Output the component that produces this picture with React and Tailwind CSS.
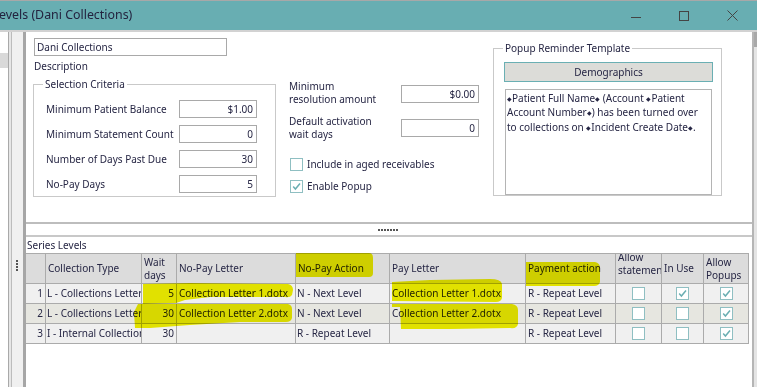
import React from "react";

const BORDER = "border-[#a9a9a9]";

function Box({ children, className = "" }) {
  return (
    <div
      className={`h-[18px] w-[78px] border ${BORDER} bg-white flex items-center justify-end pr-[3px] ${className}`}
    >
      {children}
    </div>
  );
}

function Check({ checked }) {
  return (
    <div className="w-[13px] h-[13px] border border-[#8fbfc2] bg-white flex items-center justify-center shrink-0">
      {checked && (
        <svg width="11" height="11" viewBox="0 0 11 11">
          <path d="M2.2 5.6 L4.4 8 L9 2.6" fill="none" stroke="#6aaeb2" strokeWidth="1.5" />
        </svg>
      )}
    </div>
  );
}

function Dia() {
  return <span className="text-[6px] align-[1px]">◆</span>;
}

const COLS =
  "grid grid-cols-[20px_96px_35px_119px_94px_136px_90px_46px_42px_45px]";
const CELL = "border-r border-b border-[#ababab] overflow-hidden whitespace-nowrap";

function HeadCell({ children, className = "" }) {
  return (
    <div className={`${CELL} h-[30px] bg-[#dcdcdc] flex flex-col justify-center pl-[2px] leading-[13px] ${className}`}>
      {children}
    </div>
  );
}

function Row({ n, bg, type, wait, npl, npa, pl, pa, c1, c2, c3 }) {
  const base = `${CELL} h-[20px] flex items-center ${bg}`;
  return (
    <>
      <div className={`${base} justify-end pr-[2px]`}>{n}</div>
      <div className={`${base} pl-[1px]`}>{type}</div>
      <div className={`${base} justify-end pr-[2px]`}>{wait}</div>
      <div className={`${base} pl-[2px]`}>{npl}</div>
      <div className={`${base} pl-[1px]`}>{npa}</div>
      <div className={`${base} pl-[2px]`}>{pl}</div>
      <div className={`${base} pl-[2px]`}>{pa}</div>
      <div className={`${base} justify-center`}>
        <Check checked={c1} />
      </div>
      <div className={`${base} justify-center`}>
        <Check checked={c2} />
      </div>
      <div className={`${base} justify-center`}>
        <Check checked={c3} />
      </div>
    </>
  );
}

export default function App() {
  return (
    <div className="relative w-[757px] h-[387px] overflow-hidden bg-white text-[10px] text-[#262644] font-['Noto_Sans',sans-serif]">
      {/* Title bar */}
      <div className="h-[30px] border-t border-[#a8a8a8] bg-[#68aeb2] flex items-center">
        <span className="text-[12.4px] -ml-[1px] text-[#23233f] leading-none">evels (Dani Collections)</span>
        <div className="ml-auto mr-[19px] flex items-center gap-[38px]">
          <svg width="10" height="10" viewBox="0 0 10 10">
            <path d="M0 6.5 H10" stroke="#444" strokeWidth="1" />
          </svg>
          <svg width="10" height="10" viewBox="0 0 10 10">
            <rect x="0.5" y="0.5" width="9" height="9" fill="none" stroke="#444" strokeWidth="1" />
          </svg>
          <svg width="11" height="11" viewBox="0 0 11 11">
            <path d="M0.5 0.5 L10.5 10.5 M10.5 0.5 L0.5 10.5" stroke="#444" strokeWidth="1" />
          </svg>
        </div>
      </div>
      <div className="h-[2px] bg-[#d2d2d2]" />

      {/* Body */}
      <div className="flex h-[355px]">
        <div className="w-[8px] bg-white flex flex-col">
          <div className="h-[21px]" />
          <div className="h-[15px] bg-[#d9d9d9]" />
        </div>
        <div className="w-[1px] bg-[#a9a9a9]" />
        <div className="w-[2px] bg-[#e6e6e6]" />
        <div className="w-[1px] bg-[#bcbcbc]" />
        <div className="w-[11px] bg-[#f0f0f0] flex flex-col gap-[1px] pl-[4px] pt-[228px]">
          <div className="w-[2px] h-[2px] bg-[#555]" />
          <div className="w-[2px] h-[2px] bg-[#555]" />
          <div className="w-[2px] h-[2px] bg-[#555]" />
          <div className="w-[2px] h-[2px] bg-[#555]" />
        </div>
        <div className="w-[3px] bg-[#a6a6a6]" />

        {/* Main */}
        <div className="w-[726px] flex flex-col">
          {/* Top panel */}
          <div className="h-[192px] border-b-2 border-[#bdbdbd] flex items-start">
            {/* Left column */}
            <div className="ml-[7px] mt-[6px] w-[243px] flex flex-col">
              <div className={`ml-[1px] w-[193px] h-[18px] border ${BORDER} flex items-center pl-[2px]`}>
                Dani Collections
              </div>
              <div className="ml-[1px] mt-[4px] leading-[13px]">Description</div>
              <fieldset className="mt-[5px] w-[243px] border border-[#c9c9c9]">
                <legend className="ml-[9px] px-[2px] leading-[13px]">Selection Criteria</legend>
                <div className="pt-[9px] pb-[3px] pl-[12px] pr-[18px] flex flex-col gap-[7px]">
                  {[
                    ["Minimum Patient Balance", "$1.00"],
                    ["Minimum Statement Count", "0"],
                    ["Number of Days Past Due", "30"],
                    ["No-Pay Days", "5"],
                  ].map(([l, v]) => (
                    <div key={l} className="flex items-center justify-between">
                      <span>{l}</span>
                      <Box>{v}</Box>
                    </div>
                  ))}
                </div>
              </fieldset>
            </div>

            {/* Middle column */}
            <div className="ml-[13px] mt-[48px] w-[190px] flex flex-col">
              <div className="h-[26px] flex items-center justify-between">
                <div className="leading-[13px]">
                  Minimum
                  <br />
                  resolution amount
                </div>
                <Box className="mt-[2px]">$0.00</Box>
              </div>
              <div className="mt-[9px] h-[26px] flex items-center justify-between">
                <div className="leading-[13px]">
                  Default activation
                  <br />
                  wait days
                </div>
                <Box>0</Box>
              </div>
              <div className="mt-[17px] pl-[1px] flex items-center gap-[4px] h-[13px]">
                <Check />
                <span>Include in aged receivables</span>
              </div>
              <div className="mt-[9px] pl-[1px] flex items-center gap-[4px] h-[13px]">
                <Check checked />
                <span>Enable Popup</span>
              </div>
            </div>

            {/* Popup group */}
            <fieldset className="ml-[14px] mt-[10px] w-[229px] border border-[#c9c9c9]">
              <legend className="ml-[9px] px-[2px] leading-[13px]">Popup Reminder Template</legend>
              <div className="pt-[7px] pl-[10px] pr-[8px] flex flex-col">
                <div className="h-[20px] w-[209px] bg-[#dcdcd8] border border-[#6aafb3] flex items-center justify-center">
                  Demographics
                </div>
                <div className="mt-[7px] ml-[1px] w-[207px] h-[106px] border border-[#b4b4b4] pl-[1px] pt-[2px] leading-[13.4px] whitespace-nowrap">
                  <div>
                    <Dia />Patient Full Name<Dia /> (Account <Dia />Patient
                  </div>
                  <div>
                    Account Number<Dia />) has been turned over
                  </div>
                  <div>
                    to collections on <Dia />Incident Create Date<Dia />.
                  </div>
                </div>
              </div>
            </fieldset>
          </div>

          {/* Splitter strip */}
          <div className="h-[11px] flex items-start pt-[5px] pl-[352px] gap-[1px]">
            {[0, 1, 2, 3, 4, 5, 6].map((i) => (
              <div key={i} className="w-[2px] h-[2px] bg-[#555]" />
            ))}
          </div>
          <div className="h-[2px] bg-[#c8c8c8]" />
          <div className="h-[16px] pl-[1px] leading-[16px]">Series Levels</div>

          {/* Grid */}
          <div className={`${COLS} w-[723px] border-t border-[#ababab]`}>
            <HeadCell />
            <HeadCell className="pl-[2px]">Collection Type</HeadCell>
            <HeadCell>
              <div>Wait</div>
              <div>days</div>
            </HeadCell>
            <HeadCell>No-Pay Letter</HeadCell>
            <HeadCell>No-Pay Action</HeadCell>
            <HeadCell>Pay Letter</HeadCell>
            <HeadCell>Payment action</HeadCell>
            <HeadCell>
              <div className="-mt-[10px]">Allow</div>
              <div>statement</div>
            </HeadCell>
            <HeadCell>In Use</HeadCell>
            <HeadCell>
              <div>Allow</div>
              <div>Popups</div>
            </HeadCell>

            <Row
              n="1"
              bg="bg-[#f0f0f0]"
              type="L - Collections Letter"
              wait="5"
              npl="Collection Letter  1.dotx"
              npa="N - Next Level"
              pl="Collection Letter  1.dotx"
              pa="R - Repeat Level"
              c2
              c3
            />
            <Row
              n="2"
              bg="bg-[#e6e6e0]"
              type="L - Collections Letter"
              wait="30"
              npl="Collection Letter  2.dotx"
              npa="N - Next Level"
              pl="Collection Letter  2.dotx"
              pa="R - Repeat Level"
              c3
            />
            <Row
              n="3"
              bg="bg-[#f0f0f0]"
              type="I - Internal Collection"
              wait="30"
              npl=""
              npa="R - Repeat Level"
              pl=""
              pa="R - Repeat Level"
              c3
            />
          </div>
        </div>

        {/* Right edge */}
        <div className="w-[2px] bg-[#b5b5b5]" />
        <div className="w-[3px] bg-[#e4e4e4] flex flex-col">
          <div className="h-[15px] bg-[#a8a8a8]" />
        </div>
      </div>

      {/* Highlighter marks */}
      <svg
        className="absolute left-0 top-0 pointer-events-none mix-blend-multiply"
        width="757"
        height="387"
        viewBox="0 0 757 387"
      >
        <g fill="#efef00">
          <path d="M296 253 H369 Q373 253 373 258 V273 Q373 277 369 277 H296 Z" />
          <path d="M526 262 H595 Q600 263 600 268 V282 Q599 286 594 286 H526 Z" />
          <path d="M143 284 L190 283 L288 284 Q293 285 293 290 L292 295 Q290 298 285 297 L210 297 L185 300 L176 303 L143 304 Z" />
          <path d="M138 304 L288 304 Q292 305 292 309 L292 318 Q291 322 286 322 L240 322 L190 325 L150 328 L135 328 L134 312 Z" />
          <path d="M392 282 L430 280 L490 279 Q501 279 502 284 L502 298 Q501 302 496 302 L392 301 Z" />
          <path d="M392 304 L512 304 Q518 305 518 310 L518 324 Q517 329 510 328 L450 329 L401 329 L400 307 L392 307 Z" />
        </g>
      </svg>
    </div>
  );
}
